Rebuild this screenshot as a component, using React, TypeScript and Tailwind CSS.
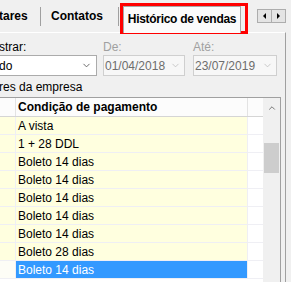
import { ChevronDown, ChevronUp } from "lucide-react";

const rows = [
  "A vista",
  "1 + 28 DDL",
  "Boleto 14 dias",
  "Boleto 14 dias",
  "Boleto 14 dias",
  "Boleto 14 dias",
  "Boleto 14 dias",
  "Boleto 28 dias",
  "Boleto 14 dias",
];

function DateBox({ value }: { value: string }) {
  return (
    <div className="flex h-[21px] items-center justify-between border border-[#cfcfcf] bg-[#f7f7f7] pl-[1px] pr-[3px] text-[#6d6d6d]">
      <span>{value}</span>
      <ChevronDown size={11} strokeWidth={1.5} className="text-[#b4b4b4]" />
    </div>
  );
}

export default function App() {
  return (
    <div className="relative h-[282px] w-[291px] overflow-hidden bg-[#f0f0f0] font-['Liberation_Sans',sans-serif] text-[12px] leading-[14px] text-black">
      {/* abas */}
      <div className="flex h-[32px] items-end">
        <div className="flex h-[32px] w-[41px] items-center -ml-[1px] font-bold">tares</div>
        <div className="mb-[6px] h-[19px] w-px bg-[#a0a0a0] self-end" />
        <div className="ml-[10px] flex h-[32px] w-[67px] items-center font-bold">Contatos</div>
        <div className="mb-[6px] h-[19px] w-px bg-[#a0a0a0] self-end" />
        <div className="ml-[4px] flex h-[27px] w-[118px] items-start justify-center border-x border-t border-[#a8a8a8] bg-[#fbfbfb] pt-[5px] font-bold tracking-[-0.3px] -mb-px relative z-10">
          Histórico de vendas
        </div>
        <div className="flex h-[32px] flex-1 items-start justify-end pr-[5px] pt-[9px]">
          <div className="flex h-[14px] w-[15px] items-center justify-center border border-[#adadad] bg-[#e4e4e4]">
            <div className="h-0 w-0 border-y-[3px] border-r-[3px] border-y-transparent border-r-black" />
          </div>
          <div className="-ml-px flex h-[14px] w-[15px] items-center justify-center border border-[#adadad] bg-[#e4e4e4]">
            <div className="h-0 w-0 border-y-[3px] border-l-[3px] border-y-transparent border-l-black" />
          </div>
        </div>
      </div>

      {/* conteúdo da aba */}
      <div className="h-[250px] w-[286px] border-r border-t border-r-[#a0a0a0] border-t-white">
        <div className="mt-[7px] flex text-[12px]">
          <div className="w-[97px] -ml-[1px]">strar:</div>
          <div className="ml-[7px] w-[82px] text-[#a0a0a0]">De:</div>
          <div className="ml-[8px] w-[84px] text-[#a0a0a0]">Até:</div>
        </div>
        <div className="mt-[1px] flex">
          <div className="flex h-[21px] w-[97px] items-center justify-between border-y border-r border-[#ababab] bg-white pr-[4px]">
            <span className="-ml-[1px]">do</span>
            <ChevronDown size={11} strokeWidth={2} className="text-[#606060]" />
          </div>
          <div className="ml-[6px] w-[82px]">
            <DateBox value="01/04/2018" />
          </div>
          <div className="ml-[8px] w-[84px]">
            <DateBox value="23/07/2019" />
          </div>
        </div>
        <div className="mt-[4px] -ml-[1px] h-[17px]">res da empresa</div>

        {/* grade */}
        <div className="flex h-[200px] w-[281px] border-r border-t border-[#a0a0a0]">
          <div className="w-[263px] bg-white">
            <div className="flex h-[19px] border-b border-[#d5d5d5] bg-[#fcfcfc]">
              <div className="w-[16px] border-r border-[#e3e3e3]" />
              <div className="flex w-[232px] items-center border-r border-[#e3e3e3] pl-[2px] font-bold">
                Condição de pagamento
              </div>
            </div>
            {rows.map((r, i) => {
              const sel = i === rows.length - 1;
              return (
                <div key={i} className="flex h-[18px] border-b border-[#efeff4]">
                  <div className={`w-[16px] border-r border-[#efeff4] ${sel ? "bg-[#fdfdf6]" : "bg-[#ffffdf]"}`} />
                  <div
                    className={`flex w-[232px] items-center border-r border-[#efeff4] pl-[2px] ${
                      sel ? "bg-[#3399ff] text-white" : "bg-[#ffffdf]"
                    }`}
                  >
                    {r}
                  </div>
                </div>
              );
            })}
          </div>
          <div className="flex w-[17px] flex-col items-center bg-[#f0f0f0]">
            <ChevronUp size={10} strokeWidth={2} className="mt-[5px] text-[#606060]" />
            <div className="mt-[30px] h-[30px] w-[15px] bg-[#cdcdcd]" />
          </div>
        </div>
      </div>

      {/* destaque vermelho */}
      <div className="pointer-events-none absolute left-[120px] top-[3px] h-[31px] w-[128px] border-[3px] border-[#ff0000]" />
    </div>
  );
}
